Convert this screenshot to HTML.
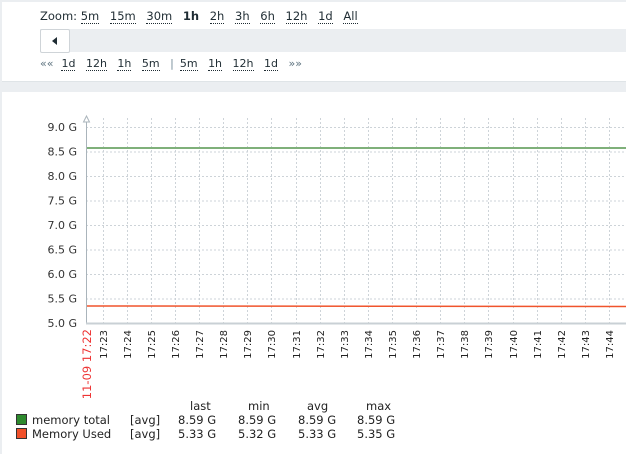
<!DOCTYPE html>
<html><head><meta charset="utf-8"><style>
body{margin:0;width:626px;height:454px;overflow:hidden;background:#fff;font-family:"DejaVu Sans","Liberation Sans",sans-serif;position:relative}
.strip{position:absolute;left:0;top:0;width:2px;height:454px;background:#ebeef1}
.topl{position:absolute;left:0;top:0;width:626px;height:2px;background:#ebeef1}
.t{position:absolute;font-size:11.5px;color:#1f2c33;white-space:nowrap}
.t u{text-decoration:none;border-bottom:1px dotted #1f2c33;margin-right:7px}
.bar{position:absolute;left:40px;top:29px;width:586px;height:23px;background:#ebeef1}
.btn{position:absolute;left:40px;top:29px;width:28px;height:22px;background:#fff;border:1px solid #cfd4d8;border-radius:2px}
.band{position:absolute;left:2px;top:81px;width:624px;height:10px;background:#ebeef1;border-top:1px solid #dfe4e7}
</style></head><body>
<div class="topl"></div><div class="strip"></div>
<div class="t" style="left:40px;top:9px">Zoom: <u>5m</u> <u>15m</u> <u>30m</u> <b style="margin-right:7px">1h</b> <u>2h</u> <u>3h</u> <u>6h</u> <u>12h</u> <u>1d</u> <u>All</u></div>
<div class="bar"></div><div class="btn"><svg width="28" height="22"><polygon points="11,11 16,7 16,15" fill="#1f2c33"/></svg></div>
<div class="t" style="left:40px;top:57px;font-size:11px"><span style="color:#5f7480;margin-right:8px">««</span><u>1d</u> <u>12h</u> <u>1h</u> <u>5m</u> <span style="color:#768d99;margin-right:6px">|</span><u>5m</u> <u>1h</u> <u>12h</u> <u>1d</u> <span style="color:#5f7480">»»</span></div>
<div class="band"></div>
<svg style="position:absolute;left:0;top:0" width="626" height="454" font-family="DejaVu Sans, sans-serif">
<g stroke="#cdd3d8" stroke-dasharray="2,2" stroke-width="1">
<line x1="86" y1="127.5" x2="626" y2="127.5"/><line x1="86" y1="152" x2="626" y2="152"/><line x1="86" y1="176.5" x2="626" y2="176.5"/><line x1="86" y1="201" x2="626" y2="201"/><line x1="86" y1="225.5" x2="626" y2="225.5"/><line x1="86" y1="250" x2="626" y2="250"/><line x1="86" y1="274.5" x2="626" y2="274.5"/><line x1="86" y1="299" x2="626" y2="299"/>
</g>
<g stroke="#cdd3d8" stroke-dasharray="2,2" id="vg"></g>
<line x1="86.5" y1="118" x2="86.5" y2="324" stroke="#aab4bb"/>
<polygon points="86.5,116 83.5,122 89.5,122" fill="#fff" stroke="#aab4bb"/>
<line x1="86" y1="323.5" x2="626" y2="323.5" stroke="#c9d0d5" stroke-width="2"/>
<line x1="87" y1="148" x2="626" y2="148" stroke="#7fb07a" stroke-width="2"/>
<line x1="87" y1="306" x2="626" y2="306.5" stroke="#f0542c" stroke-width="1.5"/>
<g font-size="11" fill="#333" text-anchor="end">
<text x="77" y="131">9.0 G</text><text x="77" y="155.5">8.5 G</text><text x="77" y="180">8.0 G</text><text x="77" y="204.5">7.5 G</text><text x="77" y="229">7.0 G</text><text x="77" y="253.5">6.5 G</text><text x="77" y="278">6.0 G</text><text x="77" y="302.5">5.5 G</text><text x="77" y="327">5.0 G</text>
</g>
<text transform="translate(91,329) rotate(-90)" font-size="11.5" fill="#e33" text-anchor="end">11-09 17:22</text>
<g id="tl" font-size="10" fill="#222" text-anchor="end"></g>
<g font-size="11.5" fill="#222">
<text x="190" y="410">last</text><text x="248" y="410">min</text><text x="307" y="410">avg</text><text x="366" y="410">max</text>
<rect x="16.5" y="414.5" width="10" height="10" fill="#2e8a2e" stroke="#333"/>
<rect x="16.5" y="428.5" width="10" height="10" fill="#f0502a" stroke="#333"/>
<text x="32" y="424">memory total</text><text x="130" y="424">[avg]</text><text x="178" y="424">8.59 G</text><text x="238" y="424">8.59 G</text><text x="298" y="424">8.59 G</text><text x="357" y="424">8.59 G</text>
<text x="32" y="438">Memory Used</text><text x="130" y="438">[avg]</text><text x="178" y="438">5.33 G</text><text x="238" y="438">5.32 G</text><text x="298" y="438">5.33 G</text><text x="357" y="438">5.35 G</text>
</g>
</svg>
<script>
var vg=document.getElementById('vg'),tl=document.getElementById('tl'),ns='http://www.w3.org/2000/svg';
for(var k=0;k<22;k++){var x=Math.round(102.7+24.11*k)+0.5;
var l=document.createElementNS(ns,'line');l.setAttribute('x1',x);l.setAttribute('x2',x);l.setAttribute('y1',118);l.setAttribute('y2',323);vg.appendChild(l);
var t=document.createElementNS(ns,'text');t.setAttribute('transform','translate('+(x+3.5)+',330) rotate(-90)');t.textContent='17:'+(23+k);tl.appendChild(t);}
</script>
</body></html>
